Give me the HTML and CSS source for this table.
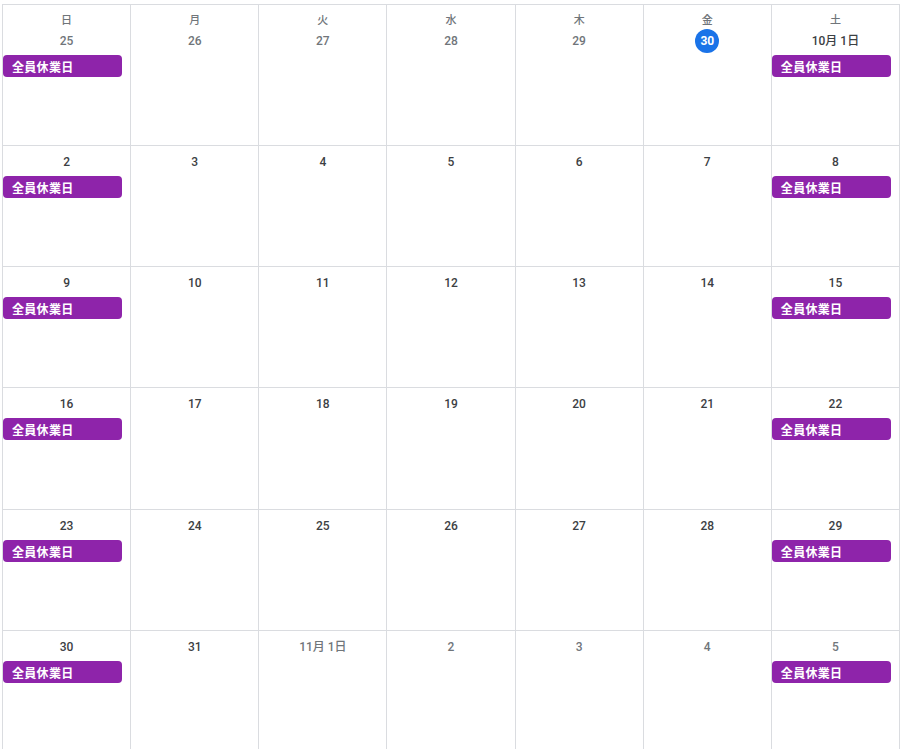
FILE: index.html
```html
<!DOCTYPE html>
<html lang="ja">
<head>
    <meta charset="UTF-8">
    <meta name="viewport" content="width=device-width, initial-scale=1.0">
    <title>カレンダー 月表示</title>
    <link rel="stylesheet" href="styles.css">
</head>
<body>
    <div class="month">
        <!-- 1週目 -->
        <div class="cell"><div class="dow">日</div><div class="day"><span class="num muted">25</span></div><div class="chip">全員休業日</div></div>
        <div class="cell"><div class="dow">月</div><div class="day"><span class="num muted">26</span></div></div>
        <div class="cell"><div class="dow">火</div><div class="day"><span class="num muted">27</span></div></div>
        <div class="cell"><div class="dow">水</div><div class="day"><span class="num muted">28</span></div></div>
        <div class="cell"><div class="dow">木</div><div class="day"><span class="num muted">29</span></div></div>
        <div class="cell"><div class="dow">金</div><div class="day"><span class="num today">30</span></div></div>
        <div class="cell"><div class="dow">土</div><div class="day"><span class="num">10月 1日</span></div><div class="chip">全員休業日</div></div>

        <!-- 2週目 -->
        <div class="cell"><div class="day"><span class="num">2</span></div><div class="chip">全員休業日</div></div>
        <div class="cell"><div class="day"><span class="num">3</span></div></div>
        <div class="cell"><div class="day"><span class="num">4</span></div></div>
        <div class="cell"><div class="day"><span class="num">5</span></div></div>
        <div class="cell"><div class="day"><span class="num">6</span></div></div>
        <div class="cell"><div class="day"><span class="num">7</span></div></div>
        <div class="cell"><div class="day"><span class="num">8</span></div><div class="chip">全員休業日</div></div>

        <!-- 3週目 -->
        <div class="cell"><div class="day"><span class="num">9</span></div><div class="chip">全員休業日</div></div>
        <div class="cell"><div class="day"><span class="num">10</span></div></div>
        <div class="cell"><div class="day"><span class="num">11</span></div></div>
        <div class="cell"><div class="day"><span class="num">12</span></div></div>
        <div class="cell"><div class="day"><span class="num">13</span></div></div>
        <div class="cell"><div class="day"><span class="num">14</span></div></div>
        <div class="cell"><div class="day"><span class="num">15</span></div><div class="chip">全員休業日</div></div>

        <!-- 4週目 -->
        <div class="cell"><div class="day"><span class="num">16</span></div><div class="chip">全員休業日</div></div>
        <div class="cell"><div class="day"><span class="num">17</span></div></div>
        <div class="cell"><div class="day"><span class="num">18</span></div></div>
        <div class="cell"><div class="day"><span class="num">19</span></div></div>
        <div class="cell"><div class="day"><span class="num">20</span></div></div>
        <div class="cell"><div class="day"><span class="num">21</span></div></div>
        <div class="cell"><div class="day"><span class="num">22</span></div><div class="chip">全員休業日</div></div>

        <!-- 5週目 -->
        <div class="cell"><div class="day"><span class="num">23</span></div><div class="chip">全員休業日</div></div>
        <div class="cell"><div class="day"><span class="num">24</span></div></div>
        <div class="cell"><div class="day"><span class="num">25</span></div></div>
        <div class="cell"><div class="day"><span class="num">26</span></div></div>
        <div class="cell"><div class="day"><span class="num">27</span></div></div>
        <div class="cell"><div class="day"><span class="num">28</span></div></div>
        <div class="cell"><div class="day"><span class="num">29</span></div><div class="chip">全員休業日</div></div>

        <!-- 6週目 -->
        <div class="cell"><div class="day"><span class="num">30</span></div><div class="chip">全員休業日</div></div>
        <div class="cell"><div class="day"><span class="num">31</span></div></div>
        <div class="cell"><div class="day"><span class="num muted">11月 1日</span></div></div>
        <div class="cell"><div class="day"><span class="num muted">2</span></div></div>
        <div class="cell"><div class="day"><span class="num muted">3</span></div></div>
        <div class="cell"><div class="day"><span class="num muted">4</span></div></div>
        <div class="cell"><div class="day"><span class="num muted">5</span></div><div class="chip">全員休業日</div></div>
    </div>
</body>
</html>
```

FILE: styles.css
```css
html, body {
    overflow: hidden;
}

body {
    margin: 0;
    padding: 4px 0 0 2px;
    background: #fff;
    font-family: Roboto, "Noto Sans CJK JP", sans-serif;
    color: #3c4043;
}

.month {
    display: grid;
    grid-template-columns: repeat(7, 1fr);
    grid-template-rows: 141px repeat(5, 121.2px);
    width: 897px;
    border-left: 1px solid #dadce0;
    border-top: 1px solid #dadce0;
}

.cell {
    border-right: 1px solid #dadce0;
    border-bottom: 1px solid #dadce0;
    padding-top: 4px;
    min-width: 0;
}

.dow {
    margin-top: 4px;
    line-height: 16px;
    font-size: 11px;
    font-weight: 500;
    color: #70757a;
    text-align: center;
}

.day {
    text-align: center;
    height: 24px;
}

.num {
    display: inline-block;
    min-width: 24px;
    height: 24px;
    line-height: 24px;
    padding: 0 2px;
    box-sizing: border-box;
    border-radius: 12px;
    font-size: 12px;
    font-weight: 500;
    color: #3c4043;
}

.num.muted {
    color: #70757a;
}

.num.today {
    background: #1a73e8;
    color: #fff;
    font-weight: 700;
}

.chip {
    display: flex;
    align-items: center;
    margin: 2px 8px 0 0;
    height: 22px;
    padding: 1px 0 0 9px;
    box-sizing: border-box;
    border-radius: 4px;
    background: #8e24aa;
    color: #fff;
    font-family: "Noto Sans CJK JP", sans-serif;
    font-size: 12px;
    font-weight: 700;
    letter-spacing: 0.3px;
    white-space: nowrap;
    overflow: hidden;
}
```
